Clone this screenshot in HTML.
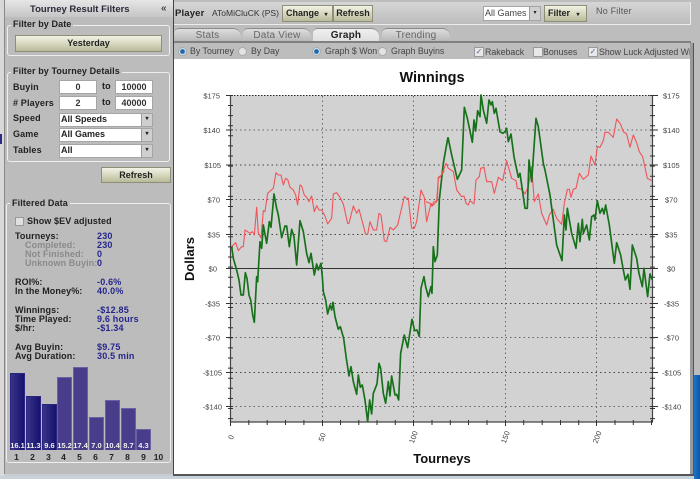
<!DOCTYPE html>
<html><head><meta charset="utf-8">
<style>
html,body{margin:0;padding:0;width:700px;height:479px;overflow:hidden;background:#c9ccd0;font-family:"Liberation Sans",sans-serif}
.a{position:absolute;white-space:nowrap}
.b{font-weight:bold;font-size:9px;color:#222;letter-spacing:.15px}
.box{position:absolute;border:1px solid #eee;border-radius:3px;box-sizing:border-box}
.leg{position:absolute;background:#bcbcbc;font-weight:bold;font-size:9px;color:#222;padding:0 2px;white-space:nowrap;letter-spacing:.1px}
.btn{position:absolute;box-sizing:border-box;border:1px solid #8f8f78;background:linear-gradient(#f2f2e6,#d2d2b8 60%,#b9b99c);font-weight:bold;font-size:9px;color:#222;text-align:center;white-space:nowrap}
.inp{position:absolute;box-sizing:border-box;background:#fff;border:1px solid #a5a5a5;font-weight:bold;font-size:9px;color:#333;text-align:center;height:14px;line-height:12px}
.sel{position:absolute;box-sizing:border-box;background:#fff;border:1px solid #a5a5a5;font-weight:bold;font-size:9px;color:#222;height:14px;line-height:11px;left:59px;width:94px;padding-left:1px}
.sel i{position:absolute;right:0;top:0;bottom:0;width:10px;background:#cfcfcf;border-left:1px solid #999;font-style:normal;font-size:6px;line-height:11px;text-align:center;color:#222}
.v{color:#26268c;font-weight:bold;font-size:9px;position:absolute;left:97px;white-space:nowrap;letter-spacing:.2px}
.l{color:#222;font-weight:bold;font-size:9px;position:absolute;left:15px;white-space:nowrap;letter-spacing:.1px}
.g{color:#8a8a8a;left:25px}
.bar{position:absolute;box-sizing:border-box;background:#483d8b;border:1px solid #6a62a0;border-bottom:0;color:#eee;font-size:7.5px;font-weight:bold;text-align:center;width:15px}
.bar span{position:absolute;left:-2px;right:-2px;bottom:0;line-height:9px}
.d{background:linear-gradient(90deg,#3a3488,#15126e);border-color:#2a2580}
.n{position:absolute;top:452px;width:15px;text-align:center;font-size:8.5px;font-weight:bold;color:#222}
.tab{position:absolute;top:28px;height:14px;font-size:10px;color:#666;text-align:center;line-height:14px;box-sizing:border-box;background:linear-gradient(#ddd,#b5b5b5);border-top:1px solid #8a8a8a;border-radius:5px 8px 0 0;letter-spacing:.2px}
.t{font-size:8.8px;color:#444;position:absolute;white-space:nowrap}
.r{position:absolute;width:7px;height:7px;border-radius:50%;background:#e3e3e3;border:1px solid #aaa;box-sizing:content-box}
.r.on{background:radial-gradient(#1c68a8 40%,#cfe0ee 55%)}
.c{position:absolute;width:8px;height:8px;background:#e8e8e8;border:1px solid #999;font-size:8px;line-height:8px;color:#4a6a9a;text-align:center}
svg text{font-family:"Liberation Sans",sans-serif}
</style></head><body>

<!-- left edge -->
<div class="a" style="left:0;top:0;width:5px;height:479px;background:#d8d8d8"></div>
<div class="a" style="left:0;top:134px;width:2px;height:10px;background:#2a2a80"></div>

<!-- sidebar -->
<div class="a" style="left:4px;top:0;width:169px;height:474px;background:#bcbcbc;border-left:1px solid #888;box-sizing:border-box"></div>
<div class="a" style="left:5px;top:0;width:168px;height:17px;background:linear-gradient(#e6e6e6,#c6c6c6);font-weight:bold;font-size:9.5px;line-height:19px;color:#2a2a3a;padding-left:25px;box-sizing:border-box">Tourney Result Filters<span style="position:absolute;left:156px;top:-1px;font-size:10px;color:#444">«</span></div>

<div class="box" style="left:7px;top:25px;width:163px;height:31px"></div>
<div class="leg" style="left:11px;top:19px">Filter by Date</div>
<div class="btn" style="left:15px;top:35px;width:147px;height:17px;line-height:15px">Yesterday</div>

<div class="box" style="left:7px;top:72px;width:163px;height:90px"></div>
<div class="leg" style="left:11px;top:66px">Filter by Tourney Details</div>
<div class="b a" style="left:13px;top:82px">Buyin</div>
<div class="inp" style="left:59px;top:80px;width:38px">0</div>
<div class="b a" style="left:102px;top:81px">to</div>
<div class="inp" style="left:115px;top:80px;width:38px">10000</div>
<div class="b a" style="left:13px;top:98px"># Players</div>
<div class="inp" style="left:59px;top:96px;width:38px">2</div>
<div class="b a" style="left:102px;top:97px">to</div>
<div class="inp" style="left:115px;top:96px;width:38px">40000</div>
<div class="b a" style="left:13px;top:113px">Speed</div>
<div class="sel" style="top:113px">All Speeds<i>▾</i></div>
<div class="b a" style="left:13px;top:129px">Game</div>
<div class="sel" style="top:128px">All Games<i>▾</i></div>
<div class="b a" style="left:13px;top:145px">Tables</div>
<div class="sel" style="top:144px">All<i>▾</i></div>
<div class="btn" style="left:101px;top:167px;width:70px;height:16px;line-height:14px">Refresh</div>

<div class="box" style="left:6px;top:203px;width:165px;height:260px"></div>
<div class="leg" style="left:10px;top:198px">Filtered Data</div>
<div class="a" style="left:15px;top:217px;width:7px;height:7px;background:#e0e0e0;border:1px solid #999"></div>
<div class="l" style="left:27px;top:216px">Show $EV adjusted</div>
<div class="l" style="top:231px">Tourneys:</div><div class="v" style="top:231px">230</div>
<div class="l g" style="top:240px">Completed:</div><div class="v" style="top:240px">230</div>
<div class="l g" style="top:249px">Not Finished:</div><div class="v" style="top:249px">0</div>
<div class="l g" style="top:258px">Unknown Buyin:</div><div class="v" style="top:258px">0</div>
<div class="l" style="top:277px">ROI%:</div><div class="v" style="top:277px">-0.6%</div>
<div class="l" style="top:286px">In the Money%:</div><div class="v" style="top:286px">40.0%</div>
<div class="l" style="top:305px">Winnings:</div><div class="v" style="top:305px">-$12.85</div>
<div class="l" style="top:314px">Time Played:</div><div class="v" style="top:314px">9.6 hours</div>
<div class="l" style="top:323px">$/hr:</div><div class="v" style="top:323px">-$1.34</div>
<div class="l" style="top:342px">Avg Buyin:</div><div class="v" style="top:342px">$9.75</div>
<div class="l" style="top:351px">Avg Duration:</div><div class="v" style="top:351px">30.5 min</div>

<div class="bar d" style="left:10px;top:373px;height:77px"><span>16.1</span></div>
<div class="bar d" style="left:26px;top:396px;height:54px"><span>11.3</span></div>
<div class="bar d" style="left:42px;top:404px;height:46px"><span>9.6</span></div>
<div class="bar" style="left:57px;top:377px;height:73px"><span>15.2</span></div>
<div class="bar" style="left:73px;top:367px;height:83px"><span>17.4</span></div>
<div class="bar" style="left:89px;top:417px;height:33px"><span>7.0</span></div>
<div class="bar" style="left:105px;top:400px;height:50px"><span>10.4</span></div>
<div class="bar" style="left:121px;top:408px;height:42px"><span>8.7</span></div>
<div class="bar" style="left:136px;top:429px;height:21px"><span>4.3</span></div>
<div class="n" style="left:9px">1</div><div class="n" style="left:25px">2</div><div class="n" style="left:41px">3</div><div class="n" style="left:56px">4</div><div class="n" style="left:72px">5</div><div class="n" style="left:88px">6</div><div class="n" style="left:104px">7</div><div class="n" style="left:120px">8</div><div class="n" style="left:136px">9</div><div class="n" style="left:151px">10</div>

<!-- right main -->
<div class="a" style="left:173px;top:0;width:522px;height:479px;background:#bdbdbd"></div>
<div class="a" style="left:173px;top:0;width:1px;height:475px;background:#444"></div>
<!-- top bar -->
<div class="a" style="left:174px;top:2px;width:517px;height:23px;background:linear-gradient(#d6d6d6,#bcbcbc);border-bottom:1px solid #ececec;border-right:1px solid #ececec;box-sizing:border-box"></div>
<div class="b a" style="left:175px;top:8px;font-size:9.5px">Player</div>
<div class="a" style="left:212px;top:8px;font-size:8.5px;color:#333">AToMiCluCK (PS)</div>
<div class="btn" style="left:282px;top:5px;width:51px;height:17px;line-height:15px;text-align:left;padding-left:3px">Change <span style="font-size:6px;margin-left:3px">▾</span></div>
<div class="btn" style="left:333px;top:5px;width:40px;height:17px;line-height:15px">Refresh</div>
<div class="sel" style="left:483px;top:6px;width:58px;font-weight:normal;color:#444;height:15px;line-height:13px">All Games<i style="line-height:13px">▾</i></div>
<div class="btn" style="left:544px;top:5px;width:43px;height:17px;line-height:15px;text-align:left;padding-left:3px">Filter <span style="font-size:6px;margin-left:4px">▾</span></div>
<div class="a" style="left:596px;top:6px;font-size:9px;color:#555;letter-spacing:.2px">No Filter</div>

<!-- tabs -->
<div class="tab" style="left:174px;width:67px">Stats</div>
<div class="tab" style="left:243px;width:68px">Data View</div>
<div class="tab" style="left:313px;width:66px;background:linear-gradient(#f0f0f0,#dedede);color:#222;font-weight:bold;font-size:10px">Graph</div>
<div class="tab" style="left:382px;width:68px">Trending</div>
<div class="a" style="left:174px;top:41px;width:517px;height:2px;background:#808080"></div>

<!-- options -->
<div class="r on" style="left:178px;top:47px"></div><div class="t" style="left:190px;top:46px">By Tourney</div>
<div class="r" style="left:238px;top:47px"></div><div class="t" style="left:251px;top:46px">By Day</div>
<div class="r on" style="left:312px;top:47px"></div><div class="t" style="left:325px;top:46px">Graph $ Won</div>
<div class="r" style="left:378px;top:47px"></div><div class="t" style="left:391px;top:46px">Graph Buyins</div>
<div class="c" style="left:474px;top:47px">✓</div><div class="t" style="left:485px;top:47px">Rakeback</div>
<div class="c" style="left:533px;top:47px"></div><div class="t" style="left:543px;top:47px">Bonuses</div>
<div class="c" style="left:588px;top:47px">✓</div><div class="t" style="left:599px;top:47px;width:91px;overflow:hidden">Show Luck Adjusted Winnings</div>

<!-- chart panel -->
<div class="a" style="left:173px;top:59px;width:517px;height:415px;background:#fff;border-left:1px solid #444;box-sizing:border-box"></div>
<div class="a" style="left:690px;top:43px;width:4px;height:434px;background:#9a9a9a;border-right:1px solid #555;box-sizing:border-box"></div>
<div class="a" style="left:173px;top:474px;width:521px;height:2px;background:#555"></div>
<div class="a" style="left:694px;top:0;width:6px;height:375px;background:#bdbdbd"></div>
<div class="a" style="left:694px;top:375px;width:6px;height:104px;background:linear-gradient(90deg,#1f74c4,#0f56a8)"></div>
<div class="a" style="left:0;top:476px;width:694px;height:3px;background:#c9d2da"></div>

<svg class="a" style="left:0;top:0" width="700" height="479" viewBox="0 0 700 479">
<rect x="230.5" y="95.5" width="422" height="326" fill="#d2d2d2"/>
<g stroke="#444" stroke-width="1" stroke-dasharray="1.5 3" fill="none">
<path d="M231 130H652M231 199.5H652M231 337.5H652M231 406.5H652" stroke="#666"/>
<path d="M231 165H652M231 234.5H652M231 303.5H652M231 372.5H652"/>
<path d="M322.5 96V421M413.5 96V421M505.5 96V421M596.5 96V421" stroke="#666"/>
</g>
<path d="M231 95.5H652" stroke="#222" stroke-width="1" stroke-dasharray="1.5 1.5"/>
<path d="M230.5 268.5H652.5" stroke="#333" stroke-width="1"/>
<path d="M230.5 95V422H652.5V95" fill="none" stroke="#444" stroke-width="1.2"/>
<!-- ticks -->
<g stroke="#333" fill="none" stroke-width="1">
<path d="M228 105V421M650 105V421" stroke-width="5" transform="translate(2.5,0)" stroke-dasharray="1 9.1" />
<path d="M226 95.5H233M226 130H233M226 165H233M226 199.5H233M226 234.5H233M226 268.5H233M226 303.5H233M226 337.5H233M226 372.5H233M226 406.5H233"/>
<path d="M650 95.5H658M650 130H658M650 165H658M650 199.5H658M650 234.5H658M650 268.5H658M650 303.5H658M650 337.5H658M650 372.5H658M650 406.5H658"/>
<path d="M230.5 420V426M248.8 420V425M267.2 420V425M285.5 420V425M303.9 420V425M322.5 420V426M340.5 420V425M358.8 420V425M377 420V425M395.3 420V425M413.5 420V426M432 420V425M450.3 420V425M468.5 420V425M487 420V425M505.5 420V426M523.7 420V425M542.2 420V425M560.5 420V425M578.7 420V425M596.5 420V426M615 420V425M633.3 420V425M651.5 420V425"/>
</g>
<!-- lines -->
<g transform="translate(175,90) scale(.3333)" fill="none" stroke-linejoin="round">
<polyline stroke="#f0545a" stroke-width="3.3" points="170,470 182,458 190,482 200,470 205,470 210,420 225,430 232,425 238,435 245,352 250,430 258,443 265,362 270,365 278,310 295,295 303,248 310,255 318,255 325,285 332,265 338,268 345,292 355,300 362,315 368,345 375,285 380,288 388,315 395,322 402,335 410,318 418,365 425,347 432,360 440,360 450,378 458,402 470,385 475,312 485,308 495,322 505,342 518,400 522,400 535,348 545,370 552,358 562,395 572,433 578,433 585,395 595,420 605,420 612,370 618,375 628,452 635,455 645,412 655,420 668,405 688,320 695,325 700,325 710,415 718,415 725,395 738,300 748,322 755,395 768,340 772,348 785,335 790,265 800,258 808,240"/>
<polyline stroke="#17701a" stroke-width="5" points="170,470 175,505 185,540 192,570 198,615 205,615 211,548 216,565 222,615 227,630 233,675 238,697 245,560 248,575 255,455 260,475 265,405 275,460 283,395 288,412 297,312 305,355 310,375 320,443 330,408 335,408 343,470 350,418 357,440 365,525 375,392 385,425 395,490 402,518 408,490 418,555 425,522 430,540 438,520 442,560 445,605 452,630 458,672 465,645 470,660 474,637 480,680 490,718 496,710 506,745 514,805 522,858 528,830 535,875 545,913 550,855 556,892 562,885 570,930 578,995 584,930 590,972 595,910 606,882 612,820 617,835 625,910 632,940 640,875 645,918 650,858 660,915 665,913 671,930 677,790 688,735 698,773 711,688 719,722 726,720 733,740 738,595 747,560 752,590 760,620 768,590 771,610 775,470 780,515 787,495 793,330 805,220 819,142"/>
</g>
<g transform="translate(430,90) scale(.3333)" fill="none" stroke-linejoin="round">
<polyline stroke="#f0545a" stroke-width="3.3" points="-12,335 0,340 5,348 12,335 22,332 25,262 35,255 48,220 55,235 70,245 80,300 95,320 102,318 108,340 115,345 120,332 132,342 138,270 148,260 152,235 162,232 170,275 185,275 193,310 205,262 218,272 230,212 245,265 258,272 262,295 275,298 285,312 295,290 305,230 313,335 325,312 335,370 350,405 358,375 370,358 380,385 395,403 403,340 412,298 418,298 423,322 430,298 438,295 448,250 460,268 475,255 483,198 495,225 502,170 510,172 520,152 525,127 535,127 550,142 560,87 572,103 580,125 590,132 600,172 610,135 620,158 628,185 638,200 652,265 665,272"/>
<polyline stroke="#17701a" stroke-width="5" points="54,142 65,195 82,268 95,240 103,52 112,85 127,157 132,90 137,123 143,62 150,80 153,15 160,60 170,100 177,30 183,45 187,35 193,70 198,55 210,125 218,130 225,125 230,115 235,155 243,132 252,200 265,262 270,250 285,355 292,355 297,210 305,275 318,85 325,110 340,220 345,240 360,315 380,465 396,512 403,375 408,420 412,355 425,430 438,475 445,400 450,455 457,388 460,430 470,405 478,450 485,380 492,375 495,390 502,332 510,370 517,355 522,372 527,345 538,405 553,520 560,458 572,495 580,540 586,570 594,553 600,598 607,465 620,505 627,550 637,590 642,535 653,620 660,552 667,570"/>
</g>
<!-- text -->
<text x="432" y="82" font-size="14.5" font-weight="bold" fill="#111" text-anchor="middle">Winnings</text>
<text x="442" y="463" font-size="13" font-weight="bold" fill="#111" text-anchor="middle">Tourneys</text>
<text transform="translate(194,259) rotate(-90)" font-size="13" font-weight="bold" fill="#111" text-anchor="middle">Dollars</text>
<g font-size="7.5" fill="#444" text-anchor="end">
<text x="220" y="98.5">$175</text><text x="220" y="133">$140</text><text x="221" y="168">$105</text><text x="220" y="202.5">$70</text><text x="220" y="237.5">$35</text><text x="217" y="271.5">$0</text><text x="220" y="306.5">-$35</text><text x="220" y="340.5">-$70</text><text x="222" y="375.5">-$105</text><text x="222" y="409.5">-$140</text>
</g>
<g font-size="7.5" fill="#444">
<text x="663" y="98.5">$175</text><text x="663" y="133">$140</text><text x="663" y="168">$105</text><text x="665" y="202.5">$70</text><text x="665" y="237.5">$35</text><text x="667" y="271.5">$0</text><text x="664" y="306.5">-$35</text><text x="664" y="340.5">-$70</text><text x="662" y="375.5">-$105</text><text x="662" y="409.5">-$140</text>
</g>
<g font-size="7.5" fill="#444" text-anchor="middle">
<text transform="translate(230.7,437) rotate(-70)" dy="3">0</text>
<text transform="translate(321.7,437) rotate(-70)" dy="3">50</text>
<text transform="translate(413,437) rotate(-70)" dy="3">100</text>
<text transform="translate(505,437) rotate(-70)" dy="3">150</text>
<text transform="translate(596.7,437) rotate(-70)" dy="3">200</text>
</g>
</svg>
</body></html>
